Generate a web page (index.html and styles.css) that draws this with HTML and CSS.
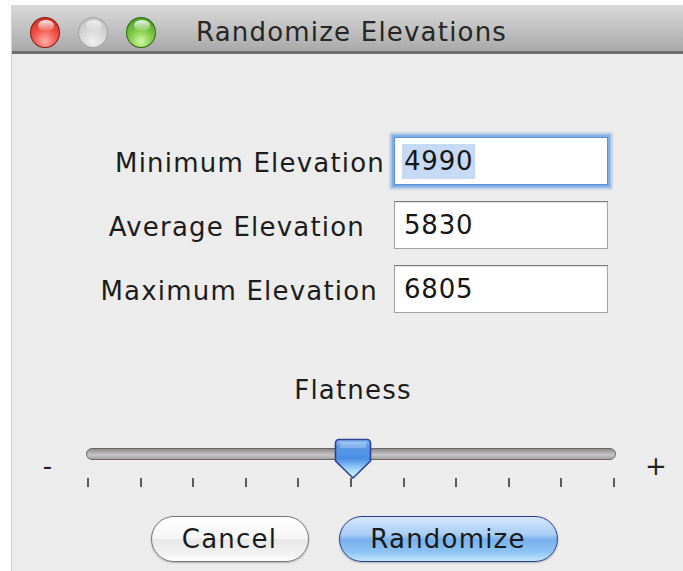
FILE: index.html
```html
<!DOCTYPE html>
<html>
<head>
<meta charset="utf-8">
<title>Randomize Elevations</title>
<link rel="stylesheet" href="styles.css">
</head>
<body>
<div class="window">
  <div class="titlebar">
    <div class="lights">
      <span class="light red"></span>
      <span class="light gray"></span>
      <span class="light green"></span>
    </div>
    <div class="title">Randomize Elevations</div>
  </div>

  <div class="content">
    <div class="form">
      <label class="lbl lbl-min">Minimum Elevation</label>
      <div class="field focused"><span class="sel">4990</span></div>

      <label class="lbl lbl-avg">Average Elevation</label>
      <div class="field"><span>5830</span></div>

      <label class="lbl lbl-max">Maximum Elevation</label>
      <div class="field"><span>6805</span></div>
    </div>

    <div class="flat-label">Flatness</div>

    <div class="slider">
      <span class="sign minus">-</span>
      <div class="rail">
        <div class="track"></div>
        <svg class="thumb" width="38" height="42" viewBox="0 0 38 42">
          <defs>
            <linearGradient id="thumbFill" x1="0" y1="0" x2="0" y2="1">
              <stop offset="0" stop-color="#8cbcf2"/>
              <stop offset="0.18" stop-color="#5b9ae6"/>
              <stop offset="0.5" stop-color="#4b8fe4"/>
              <stop offset="0.8" stop-color="#a9dcfb"/>
              <stop offset="1" stop-color="#dcf6ff"/>
            </linearGradient>
          </defs>
          <path d="M5 1.5 H33 A3.5 3.5 0 0 1 36.5 5 V23 L19 40 L1.5 23 V5 A3.5 3.5 0 0 1 5 1.5 Z"
                fill="url(#thumbFill)" stroke="#2f3f96" stroke-width="1.6" stroke-linejoin="round"/>
          <path d="M6 4 H32 V10 H6 Z" fill="#ffffff" opacity="0.25"/>
        </svg>
        <div class="ticks">
          <i></i><i></i><i></i><i></i><i></i><i></i><i></i><i></i><i></i><i></i><i></i>
        </div>
      </div>
      <span class="sign plus">+</span>
    </div>

    <div class="buttons">
      <button class="btn cancel">Cancel</button>
      <button class="btn default">Randomize</button>
    </div>
  </div>
</div>
</body>
</html>
```

FILE: styles.css
```css
html, body {
  margin: 0;
  padding: 0;
  background: #ffffff;
  overflow: hidden;
  width: 683px;
  height: 571px;
}

body {
  font-family: "DejaVu Sans", "Verdana", sans-serif;
  color: #1c1c1c;
  letter-spacing: 1.2px;
}

.window {
  margin: 5px 0 0 11px;
  width: 682px;
  height: 566px;
  border-left: 1px solid #d2d2d2;
  background: #ececec;
  display: flex;
  flex-direction: column;
}

/* ---------- title bar ---------- */
.titlebar {
  box-sizing: border-box;
  height: 49px;
  padding-top: 8px;
  border-bottom: 3px solid #6f6f6f;
  background: linear-gradient(#dadada, #c4c4c4 45%, #a9a9a9);
  display: flex;
  align-items: center;
  flex: none;
}

.lights {
  display: flex;
  gap: 18px;
  padding-left: 18px;
}

.light {
  position: relative;
  width: 30px;
  height: 31px;
  border-radius: 50%;
  box-sizing: border-box;
}

.light::after {
  content: "";
  position: absolute;
  left: 7px;
  top: 2px;
  width: 16px;
  height: 11px;
  border-radius: 50%;
  background: linear-gradient(rgba(255,255,255,0.9), rgba(255,255,255,0.1));
}

.red {
  border: 1px solid #8c1a14;
  background: radial-gradient(circle at 50% 80%, #ffb0a6 0%, #f2544a 45%, #c2221a 100%);
}

.gray {
  border: 1px solid #a4a4a4;
  background: radial-gradient(circle at 50% 80%, #f0f0f0 0%, #d6d6d6 45%, #bcbcbc 100%);
}

.gray::after {
  background: linear-gradient(rgba(255,255,255,0.7), rgba(255,255,255,0.05));
}

.green {
  border: 1px solid #2f6a18;
  background: radial-gradient(circle at 50% 80%, #d2f7a4 0%, #7cc844 45%, #3f8f1e 100%);
}

.title {
  margin-left: 40px;
  font-size: 26px;
  color: #262626;
  line-height: 30px;
}

/* ---------- form ---------- */
.content {
  flex: 1;
  display: flex;
  flex-direction: column;
}

.form {
  margin-top: 83px;
  display: grid;
  grid-template-columns: 382px 214px;
  grid-auto-rows: 48px;
  row-gap: 16px;
}

.lbl {
  font-size: 26px;
  line-height: 30px;
  align-self: center;
  justify-self: end;
  white-space: nowrap;
}

.lbl-min { margin-right: 9px; margin-top: 4px; }
.lbl-avg { margin-right: 29px; margin-top: 4px; }
.lbl-max { margin-right: 16px; margin-top: 4px; }

.field {
  box-sizing: border-box;
  height: 48px;
  background: #ffffff;
  border: 1px solid #a2a2a2;
  border-top-color: #7c7c7c;
  box-shadow: inset 0 1px 1px rgba(0,0,0,0.12);
  display: flex;
  align-items: center;
  padding-left: 9px;
  font-size: 26px;
  letter-spacing: 0.8px;
  color: #161616;
}

.field.focused {
  border: 1px solid #5d90cf;
  box-shadow: 0 0 0 2px #7eaee4, 0 0 2px 4px rgba(110, 160, 220, 0.6);
  padding-left: 7px;
}

.sel {
  background: #c6d9f5;
  padding: 0 2px;
  line-height: 35px;
}

/* ---------- slider ---------- */
.flat-label {
  margin-top: 62px;
  font-size: 26px;
  line-height: 30px;
  text-align: center;
}

.slider {
  margin-top: 35px;
  display: grid;
  grid-template-columns: 74px 530px 1fr;
}

.sign {
  font-size: 26px;
  line-height: 30px;
  text-align: center;
  padding-top: 11px;
  color: #222;
}

.sign.minus { padding-right: 2px; }
.sign.plus { margin-left: 29px; text-align: left; }

.rail {
  position: relative;
  height: 50px;
}

.track {
  margin-top: 8px;
  height: 12px;
  box-sizing: border-box;
  border: 1px solid #6e6664;
  border-radius: 6px;
  background: linear-gradient(#8c8888, #b9b9b9 45%, #c6c6c6 60%, #a5a3a3);
}

.thumb {
  position: absolute;
  left: 248px;
  top: -2px;
}

.ticks {
  margin-top: 18px;
  display: flex;
  justify-content: space-between;
  padding: 0 1px;
}

.ticks i {
  display: block;
  width: 2px;
  height: 9px;
  background: #5c5c5c;
}

/* ---------- buttons ---------- */
.buttons {
  margin-top: 26px;
  display: flex;
  justify-content: center;
  gap: 30px;
  padding-left: 2px;
}

.btn {
  font-family: "DejaVu Sans", "Verdana", sans-serif;
  font-size: 26px;
  letter-spacing: 1.2px;
  color: #1a1a1a;
  height: 46px;
  border-radius: 23px;
  padding: 0;
  line-height: 42px;
  box-shadow: 0 1px 2px rgba(0,0,0,0.25);
}

.cancel {
  width: 158px;
  border: 1px solid #767676;
  background: linear-gradient(#ffffff, #f6f6f6 48%, #e8e8e8 52%, #f3f3f3 85%, #ffffff);
}

.default {
  width: 219px;
  border: 1px solid #2b3d8c;
  background: linear-gradient(#d4e7fb, #a9cdf4 40%, #78b0ec 52%, #8ec5f3 80%, #c2e6fc);
}
```
